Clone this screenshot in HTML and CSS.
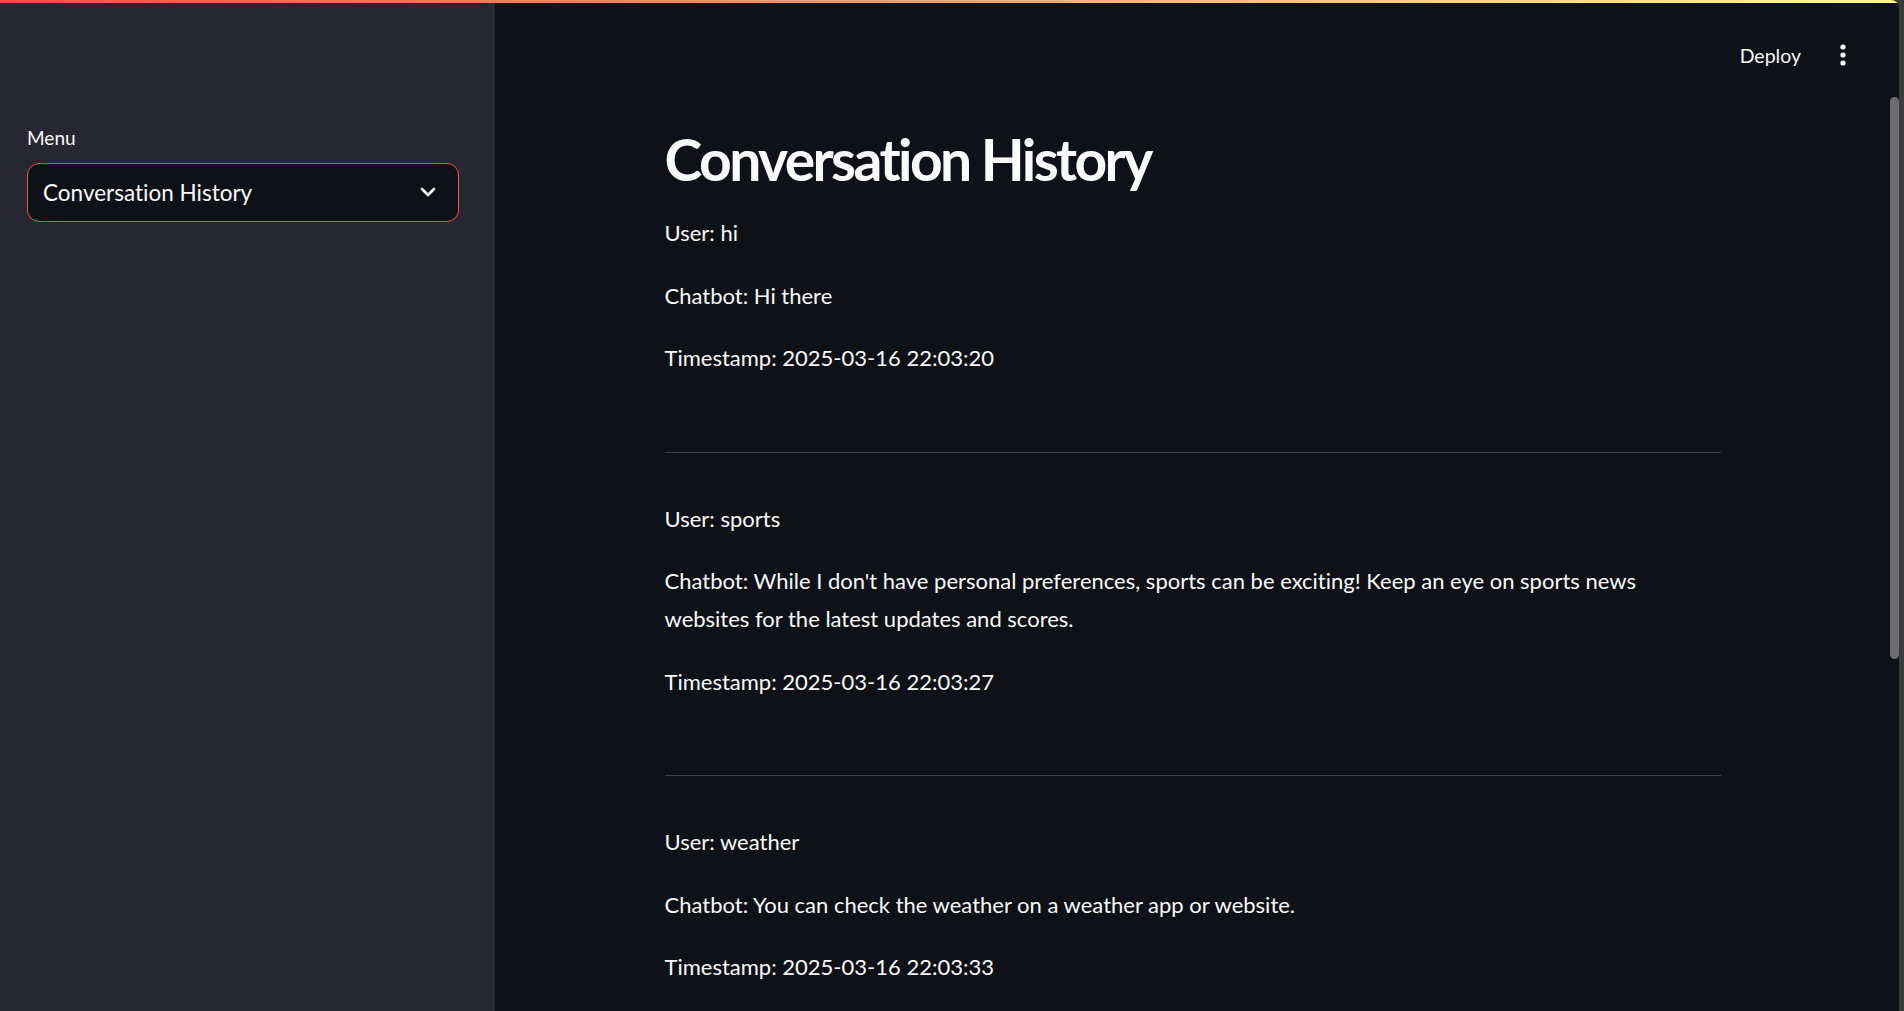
FILE: index.html
```html
<!DOCTYPE html>
<html lang="en">
<head>
<meta charset="utf-8">
<title>Conversation History</title>
<link rel="stylesheet" href="styles.css">
</head>
<body>
<div class="app">
  <div class="decoration"></div>
  <aside class="sidebar">
    <div class="field">
      <label class="field-label">Menu</label>
      <div class="select">
        <span class="select-value">Conversation History</span>
        <svg class="chevron" width="16" height="11" viewBox="0 0 16 11"><polyline points="2,2 8,8 14,2" fill="none" stroke="#fafafa" stroke-width="2.6" stroke-linecap="round" stroke-linejoin="round"/></svg>
      </div>
    </div>
  </aside>
  <main class="main">
    <header class="toolbar">
      <span class="deploy">Deploy</span>
      <svg class="kebab" width="6" height="22" viewBox="0 0 6 22"><circle cx="3" cy="3" r="2.6" fill="#fafafa"/><circle cx="3" cy="11" r="2.6" fill="#fafafa"/><circle cx="3" cy="19" r="2.6" fill="#fafafa"/></svg>
    </header>
    <div class="content">
      <h1 class="title">Conversation History</h1>
      <div class="entry">
        <p>User: hi</p>
        <p>Chatbot: Hi there</p>
        <p>Timestamp: 2025-03-16 22:03:20</p>
      </div>
      <hr class="divider">
      <div class="entry">
        <p>User: sports</p>
        <p>Chatbot: While I don't have personal preferences, sports can be exciting! Keep an eye on sports news websites for the latest updates and scores.</p>
        <p>Timestamp: 2025-03-16 22:03:27</p>
      </div>
      <hr class="divider">
      <div class="entry">
        <p>User: weather</p>
        <p>Chatbot: You can check the weather on a weather app or website.</p>
        <p>Timestamp: 2025-03-16 22:03:33</p>
      </div>
    </div>
    <div class="thumb"></div>
  </main>
</div>
</body>
</html>
```

FILE: styles.css
```css
* { box-sizing: border-box; }
html, body { margin: 0; height: 100%; }
body {
  background: #3b3b3d;
  font-family: Lato, "Noto Sans", sans-serif;
  font-variant-ligatures: none;
  color: #fafafa;
  overflow: hidden;
}
.app {
  position: relative;
  display: flex;
  height: 100vh;
  margin-right: 5px;
  border-top-right-radius: 8px;
  overflow: hidden;
  background: #0e1117;
}
.decoration {
  position: absolute;
  top: 0; left: 0; right: 0;
  height: 3px;
  background: linear-gradient(90deg, #ff4b4b, #fffd80);
  z-index: 2;
}
.sidebar {
  width: 495px;
  flex: none;
  background: #262730;
  padding: 121px 36px 0 27px;
}
.field-label {
  display: block;
  font-size: 19px;
  line-height: 33.6px;
  margin-bottom: 8px;
}
.select {
  height: 59px;
  border: 1px solid #ff4b4b;
  border-radius: 12px;
  background: #0e1117;
  display: flex;
  align-items: center;
  justify-content: space-between;
  padding: 0 22px 0 15px;
  font-size: 22.5px;
}
.main {
  position: relative;
  flex: 1;
  display: flex;
  flex-direction: column;
  padding-right: 9px;
}
.toolbar {
  height: 110px;
  flex: none;
  display: flex;
  align-items: center;
  justify-content: flex-end;
  gap: 39px;
  padding-right: 44px;
}
.deploy { font-size: 19.5px; }
.content {
  width: 1056px;
  margin: 0 auto;
  padding-top: 15px;
}
.title {
  font-size: 57px;
  font-weight: 700;
  letter-spacing: -2.6px;
  line-height: 1.2;
  margin: 0 0 21px;
}
.entry {
  display: flex;
  flex-direction: column;
  gap: 24px;
}
.entry p {
  margin: 0;
  font-size: 22px;
  line-height: 38.4px;
}
.divider {
  border: 0;
  border-top: 1px solid rgba(250, 250, 250, 0.2);
  margin: 74px 0 47px;
}
.thumb {
  position: absolute;
  right: 0;
  top: 97px;
  width: 9px;
  height: 562px;
  border-radius: 5px;
  background: #6b6c70;
}
```
